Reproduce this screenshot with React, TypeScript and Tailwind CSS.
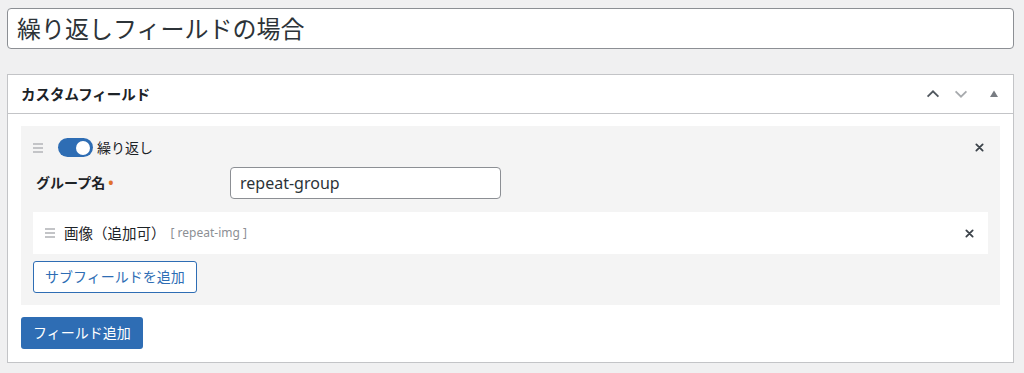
import { useState } from "react";

const font = {
	fontFamily:
		'"Noto Sans", "Noto Sans CJK JP", sans-serif',
};

function DragHandle() {
	return (
		<span className="flex w-[10px] flex-col gap-[2px]">
			<span className="h-[2px] w-full bg-[#c3c4c7]" />
			<span className="h-[2px] w-full bg-[#c3c4c7]" />
			<span className="h-[2px] w-full bg-[#c3c4c7]" />
		</span>
	);
}

function CloseIcon() {
	return (
		<svg width="9" height="9" viewBox="0 0 10 10" aria-hidden="true">
			<path
				d="M1.5 1.5 L8.5 8.5 M8.5 1.5 L1.5 8.5"
				stroke="#3c434a"
				strokeWidth="2"
				strokeLinecap="round"
			/>
		</svg>
	);
}

function Toggle({ on, onChange }: { on: boolean; onChange: () => void }) {
	return (
		<button
			type="button"
			onClick={onChange}
			className={`flex h-[19px] w-[35px] items-center rounded-full px-[3px] ${
				on ? "justify-end bg-[#2e6db4]" : "justify-start bg-[#a7aaad]"
			}`}
		>
			<span className="h-[14px] w-[14px] rounded-full bg-white" />
		</button>
	);
}

export default function App() {
	const [repeat, setRepeat] = useState(true);

	return (
		<div
			className="h-[373px] w-[1024px] bg-[#f0f0f1] pl-[7px] pr-[10px] pt-[8px] text-[#1d2327]"
			style={font}
		>
			<div className="flex h-[41px] items-center rounded-[4px] border border-[#8c8f94] bg-white px-[9px]">
				<span className="text-[24px] leading-none text-[#2c3338]">
					繰り返しフィールドの場合
				</span>
			</div>

			<div className="mt-[25px] border border-[#c3c4c7] bg-white">
				<div className="flex h-[39px] items-center justify-between border-b border-[#c3c4c7] pl-[13px] pr-[14px]">
					<h2 className="text-[14.5px] font-bold leading-none">
						カスタムフィールド
					</h2>
					<div className="flex items-center">
						<svg width="18" height="18" viewBox="0 0 20 20" aria-hidden="true">
							<path
								d="M4 13 L10 7 L16 13"
								fill="none"
								stroke="#50575e"
								strokeWidth="2"
							/>
						</svg>
						<svg
							className="ml-[10px]"
							width="18"
							height="18"
							viewBox="0 0 20 20"
							aria-hidden="true"
						>
							<path
								d="M4 7 L10 13 L16 7"
								fill="none"
								stroke="#a7aaad"
								strokeWidth="2"
							/>
						</svg>
						<svg
							className="ml-[19px]"
							width="10"
							height="10"
							viewBox="0 0 10 10"
							aria-hidden="true"
						>
							<path d="M5 1.5 L9 8 L1 8 Z" fill="#787c82" />
						</svg>
					</div>
				</div>

				<div className="px-[13px] pb-[13px] pt-[12px]">
					<div className="bg-[#f4f4f4] px-[12px] pb-[12px] pt-[11px]">
						<div className="flex h-[21px] items-center">
							<DragHandle />
							<span className="ml-[15px]">
								<Toggle on={repeat} onChange={() => setRepeat(!repeat)} />
							</span>
							<span className="ml-[4px] text-[14px] leading-none">繰り返し</span>
							<span className="ml-auto mr-[4px]">
								<CloseIcon />
							</span>
						</div>

						<div className="mt-[9px] flex items-center">
							<label className="w-[197px] pl-[3px] text-[14px] font-bold leading-none">
								グループ名<span className="ml-[3px] text-[#e0702c]">•</span>
							</label>
							<input
								defaultValue="repeat-group"
								className="h-[32px] w-[271px] rounded-[4px] border border-[#8c8f94] bg-white px-[9px] text-[16px] text-[#2c3338] outline-none"
								style={{ fontFamily: '"Noto Sans", sans-serif' }}
							/>
						</div>

						<div className="mt-[13px] flex h-[42px] items-center bg-white pl-[12px] pr-[14px]">
							<DragHandle />
							<span className="ml-[9px] text-[14.5px] leading-none">
								画像（追加可）
							</span>
							<span className="ml-[5px] text-[12px] leading-none text-[#8c8f94]">
								[ repeat-img ]
							</span>
							<span className="ml-auto">
								<CloseIcon />
							</span>
						</div>

						<button
							type="button"
							className="mt-[7px] h-[32px] rounded-[3px] border border-[#2e6db4] bg-white px-[11px] text-[14px] leading-none text-[#2e6db4]"
						>
							サブフィールドを追加
						</button>
					</div>

					<button
						type="button"
						className="mt-[12px] h-[32px] rounded-[3px] bg-[#2e6db4] px-[12px] text-[14px] leading-none text-white"
					>
						フィールド追加
					</button>
				</div>
			</div>
		</div>
	);
}
